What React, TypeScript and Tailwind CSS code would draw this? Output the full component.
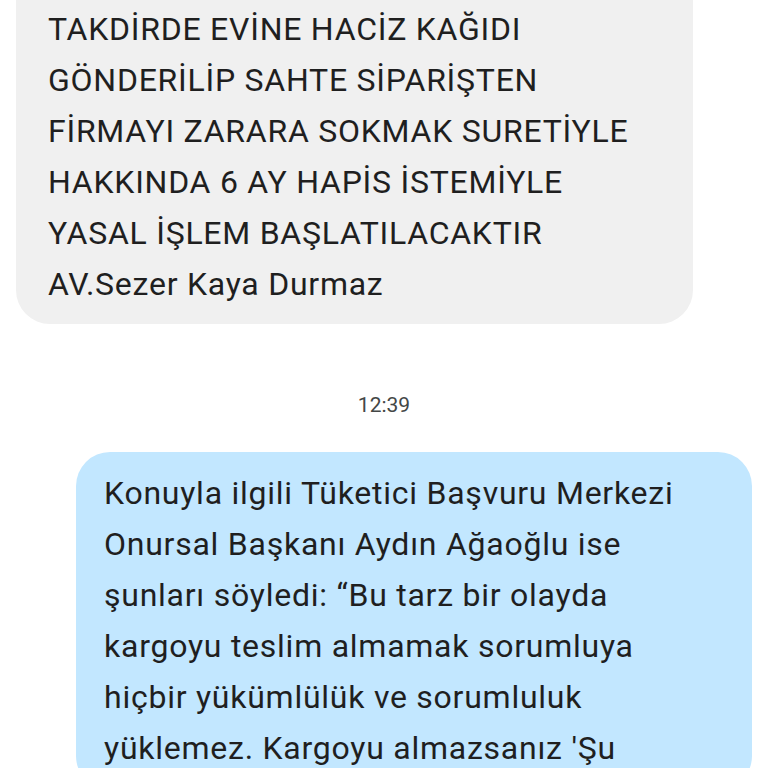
import React from "react";

export default function App() {
  const font = { fontFamily: "Roboto, 'Noto Sans', sans-serif" };
  return (
    <div className="w-[768px] h-[768px] overflow-hidden bg-white" style={font}>
      <div className="pl-4 pr-[75px]">
        <div className="-mt-[60px] bg-[#f0f0f0] rounded-[34px] pt-[64px] pb-[14px] pl-8 pr-6 text-[32px] leading-[51px] tracking-[0.75px] text-[#1f1f1f]">
          <div>TAKDİRDE EVİNE HACİZ KAĞIDI</div>
          <div>GÖNDERİLİP SAHTE SİPARİŞTEN</div>
          <div>FİRMAYI ZARARA SOKMAK SURETİYLE</div>
          <div>HAKKINDA 6 AY HAPİS İSTEMİYLE</div>
          <div>YASAL İŞLEM BAŞLATILACAKTIR</div>
          <div>AV.Sezer Kaya Durmaz</div>
        </div>
      </div>
      <div className="mt-[67px] text-center text-[21px] leading-[28px] text-[#444746]">12:39</div>
      <div className="pl-[76px] pr-4 mt-[33px]">
        <div className="bg-[#c2e7ff] rounded-[34px] pt-4 pb-4 pl-[28px] pr-6 text-[32px] leading-[51px] tracking-[0.75px] text-[#1f1f1f]">
          <div>Konuyla ilgili Tüketici Başvuru Merkezi</div>
          <div>Onursal Başkanı Aydın Ağaoğlu ise</div>
          <div>şunları söyledi: “Bu tarz bir olayda</div>
          <div>kargoyu teslim almamak sorumluya</div>
          <div>hiçbir yükümlülük ve sorumluluk</div>
          <div>yüklemez. Kargoyu almazsanız 'Şu</div>
        </div>
      </div>
    </div>
  );
}
